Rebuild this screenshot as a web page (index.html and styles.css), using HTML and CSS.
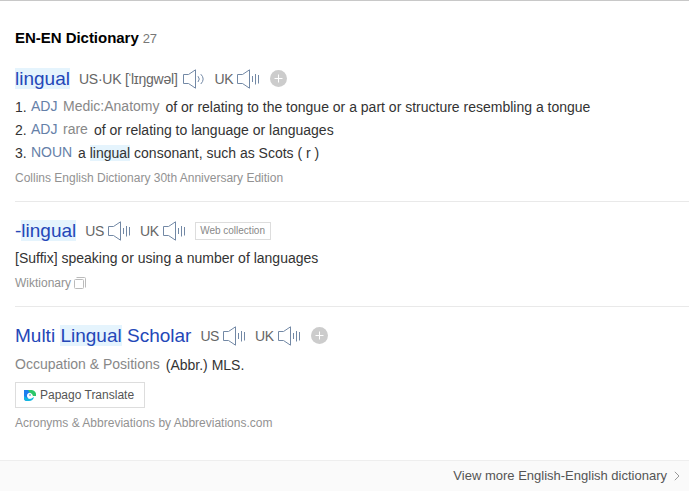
FILE: index.html
```
<!DOCTYPE html>
<html lang="en">
<head>
<meta charset="utf-8">
<title>EN-EN Dictionary</title>
<link rel="stylesheet" href="styles.css">
</head>
<body>
<svg class="defs" width="0" height="0">
  <symbol id="speaker" viewBox="0 0 24 20"><path d="M1.500 5.500H6.500L13.500 .8V19.200L6.500 14.500H1.500Z"/><path d="M16.500 7V13M19.500 5V15.500M22.500 6V14.500"/></symbol>
  <symbol id="speaker-wave" viewBox="0 0 24 20"><path d="M1.500 5.500H6.500L13.500 .8V19.200L6.500 14.500H1.500Z"/><path d="M16 7.200Q18.500 10 16 13M18.800 5.200Q23.500 10 18.800 15"/></symbol>
  <symbol id="plus" viewBox="0 0 17 17"><circle cx="8.5" cy="8.5" r="8.5" stroke="none"/><path d="M8.500 4.500V12.500M4.500 8.500H12.500"/></symbol>
</svg>
<main class="dictionary">
  <h1 class="title">EN-EN Dictionary <span class="count">27</span></h1>
  <section class="entry first">
    <div class="head"><h2 class="word"><mark>lingual</mark></h2>
      <span class="accent ipa">US·UK [<span class="stress">ˈ</span>lɪŋɡwəl]</span><svg class="speaker"><use href="#speaker-wave"/></svg>
      <span class="accent next">UK</span><svg class="speaker"><use href="#speaker"/></svg><svg class="plus"><use href="#plus"/></svg>
    </div>
    <div class="row"><span class="num">1.</span><span class="pos">ADJ</span><span class="label medic">Medic:Anatomy</span><span class="text long">of or relating to the tongue or a part or structure resembling a tongue</span></div>
    <div class="row"><span class="num">2.</span><span class="pos">ADJ</span><span class="label rare">rare</span><span class="text">of or relating to language or languages</span></div>
    <div class="row"><span class="num">3.</span><span class="pos noun">NOUN</span><span class="text">a <mark>lingual</mark> consonant, such as Scots ( r )</span></div>
    <div class="source">Collins English Dictionary 30th Anniversary Edition</div>
  </section>
  <section class="entry second">
    <div class="head"><h2 class="word">-<mark>lingual</mark></h2>
      <span class="accent">US</span><svg class="speaker"><use href="#speaker"/></svg>
      <span class="accent next">UK</span><svg class="speaker"><use href="#speaker"/></svg><span class="badge">Web collection</span>
    </div>
    <div class="row"><span class="text">[Suffix] speaking or using a number of languages</span></div>
    <div class="source">Wiktionary<svg class="copy" viewBox="0 0 13 13"><rect x=".5" y="2.5" width="9" height="9" rx="1"/><path d="M2.500 .5H10.500Q11.500 .5 11.500 1.500V10.500"/></svg></div>
  </section>
  <section class="entry third">
    <div class="head"><h2 class="word">Multi <mark>Lingual</mark> Scholar</h2>
      <span class="accent">US</span><svg class="speaker"><use href="#speaker"/></svg>
      <span class="accent next">UK</span><svg class="speaker"><use href="#speaker"/></svg><svg class="plus"><use href="#plus"/></svg>
    </div>
    <div class="row"><span class="label field">Occupation &amp; Positions</span><span class="text abbr">(Abbr.) MLS.</span></div>
    <a class="papago"><svg class="logo" viewBox="0 0 12 11"><path fill="#1c7fee" d="M0 0H6V4L3 11Q0 11 0 8Z"/><path fill="#12b8df" d="M0 6L3 8Q6 10 10 7Q9 11 5 11H3Q0 11 0 8Z"/><path fill="#2cc76a" d="M4 0H6.500A5 5 0 0 1 12 6H8L6 3Z"/><path fill="#fff" d="M6 2.800Q3 3.200 3 5.800T6 8.500H7.500V7L9 6L8 4Z"/><circle cx="6" cy="5" r=".8" fill="#167bc5"/></svg>Papago Translate</a>
    <div class="source">Acronyms &amp; Abbreviations by Abbreviations.com</div>
  </section>
</main>
<footer class="more"><span>View more English-English dictionary</span><svg class="chevron" viewBox="0 0 6 10"><path d="M.8 .8L5 5L.8 9.200"/></svg></footer>
</body>
</html>
```
FILE: styles.css
```
* { box-sizing: border-box; }
body { margin: 0; height: 491px; overflow: hidden; display: flex; flex-direction: column; border-top: 1px solid #c8c8c8; background: #fff; color: #333; font-family: "Liberation Sans", Arial, sans-serif; }
svg { flex: none; fill: none; }
.defs { position: absolute; }
.dictionary { flex: 1; padding: 26px 0 0 15px; white-space: nowrap; }
.title { margin: 0; height: 22px; line-height: 22px; font-size: 15px; letter-spacing: -.03px; color: #000; }
.count { font-size: 13px; font-weight: 400; letter-spacing: -.3px; color: #777; }
.entry { display: flex; flex-direction: column; }
.first { height: 152px; padding-top: 18px; }
.second { height: 105px; padding-top: 17px; border-top: 1px solid #e9e9e9; }
.third { padding-top: 17px; border-top: 1px solid #e9e9e9; }
.head { display: flex; align-items: center; height: 24px; }
.first .head { margin-bottom: 4px; }
.word { margin: 0 9px 0 0; font-size: 19px; font-weight: 400; line-height: 24px; color: #2447b8; }
.word mark { line-height: 20px; }
mark { background: #e5f4fd; color: inherit; }
.accent { font-size: 14px; color: #666; margin-right: 3px; letter-spacing: -.4px; }
.ipa { letter-spacing: -.25px; margin-right: 4px; }
.stress { margin: 0 -1px 0 -1px; }
.next { margin-left: 9px; }
.speaker { width: 24px; height: 20px; stroke: #7288a5; stroke-width: 1; }
.plus { width: 17px; height: 17px; margin: 0 0 1px 10px; fill: #ccc; stroke: #fff; }
.row { display: flex; align-items: center; height: 23px; font-size: 14px; }
.num { width: 16px; }
.pos { width: 32px; color: #6580a8; }
.noun { width: 47px; }
.pos, .label { margin-bottom: 2px; }
.label { color: #888; margin-right: 6px; }
.source { display: flex; align-items: center; height: 20px; margin-top: 4px; font-size: 12px; color: #929292; }
.second .row { margin-top: 3px; height: 24px; }
.second .source { margin-top: 3px; }
.copy { width: 13px; height: 13px; margin-left: 3px; stroke: #bbb; }
.badge { margin-left: 9px; height: 18px; width: 76px; border: 1px solid #ddd; text-align: center; line-height: 16px; font-size: 10px; color: #888; }
.third .row { margin-top: 5px; height: 24px; }
.papago { display: flex; align-items: center; width: 130px; height: 26px; margin-top: 5px; padding-left: 8px; border: 1px solid #ddd; font-size: 12px; color: #555; }
.logo { width: 12px; height: 11px; margin-right: 4px; }
.third .source { margin-top: 5px; }
.more { display: flex; align-items: center; justify-content: flex-end; height: 31px; padding: 0 9px 1px 0; border-top: 1px solid #eee; background: #fafafa; font-size: 13px; color: #555; }
.chevron { width: 6px; height: 10px; margin-left: 7px; stroke: #999; }
```
